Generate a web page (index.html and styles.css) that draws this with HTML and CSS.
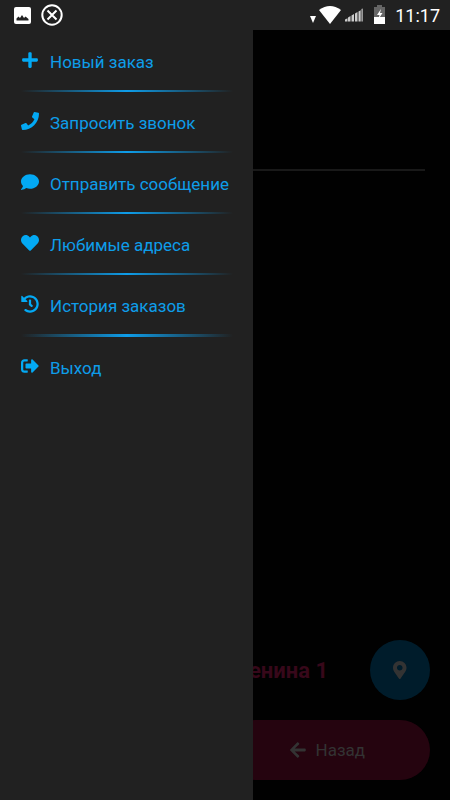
FILE: index.html
```html
<!DOCTYPE html>
<html lang="ru">
<head>
    <meta charset="utf-8" />
    <meta name="viewport" content="width=device-width, initial-scale=1" />
    <title>Такси</title>
    <link rel="stylesheet" href="styles.css">
</head>
<body class="body">
    <header class="statusbar">
        <svg class="picture" viewBox="0 0 17 17">
            <rect width="17" height="17" rx="2" fill="#fff" />
            <path d="M2.500 13.500v-2l2-2 1.500 1.500 2-3 2 3 1.500-1.500 3 2.500v1.500z" fill="#212121" />
        </svg>
        <svg class="cross" viewBox="0 0 22 22" fill="none" stroke="#fff" stroke-width="2">
            <circle cx="11" cy="11" r="9.7" />
            <path d="M6.500 6.500l9 9M15.500 6.500l-9 9" />
        </svg>
        <svg class="signals" viewBox="0 0 78 20">
            <path d="M1 11h6l-3 7z" fill="#fff" />
            <path d="M10 5q11-8 22 0l-11 14z" fill="#fff" />
            <path d="M36 14.500v2h2.500v-3.300zM39 12.500v4h2.500v-5.500zM42.500 10.500v6h2.500v-7.500zM46 8.500v8h2.500v-9.500zM49.500 6.500v10h2.200v-11.300zM52.500 4v12.500h1.200v-13z" fill="#ccc" />
            <path d="M68 0h5v2h3v10H65V2h3z" fill="#666" />
            <path d="M65 12h11v7H65z" fill="#fff" />
            <path d="M72 4l-4 6h2.500l-1 4 4-6H71z" fill="#fff" />
        </svg>
        <time class="clock">11:17</time>
    </header>
    <div class="app">
        <main class="screen">
            <hr class="line" />
            <div class="address">
                <strong class="street">Ленина 1</strong>
                <button class="locate" aria-label="Моё местоположение">
                    <svg class="pin" viewBox="0 0 384 512"><path d="M172.268 501.67C26.97 291.031 0 269.413 0 192 0 85.961 85.961 0 192 0s192 85.961 192 192c0 77.413-26.97 99.031-172.268 309.67-9.535 13.774-29.93 13.773-39.464 0zM192 272c44.183 0 80-35.817 80-80s-35.817-80-80-80-80 35.817-80 80 35.817 80 80 80z" /></svg>
                </button>
            </div>
            <div class="bottom">
                <button class="back">
                    <svg class="arrow" viewBox="0 0 448 512"><path d="M257.5 445.1l-22.2 22.2c-9.4 9.4-24.6 9.4-33.9 0L7 273c-9.4-9.4-9.4-24.6 0-33.9L201.4 44.7c9.4-9.4 24.6-9.4 33.9 0l22.2 22.2c9.5 9.5 9.3 25-.4 34.3L136.6 216H424c13.3 0 24 10.7 24 24v32c0 13.3-10.7 24-24 24H136.6l120.5 114.8c9.8 9.3 10 24.8.4 34.3z" /></svg>
                    Назад
                </button>
            </div>
        </main>
        <!-- side menu, lies over the screen -->
        <nav class="menu">
            <a class="item" href="#new">
                <svg class="icon" viewBox="-32 0 512 512"><path d="M416 208H272V64c0-17.67-14.33-32-32-32h-32c-17.67 0-32 14.33-32 32v144H32c-17.67 0-32 14.33-32 32v32c0 17.67 14.33 32 32 32h144v144c0 17.67 14.33 32 32 32h32c17.67 0 32-14.33 32-32V304h144c17.67 0 32-14.33 32-32v-32c0-17.67-14.33-32-32-32z" /></svg>
                Новый заказ
            </a>
            <hr class="separator" />
            <a class="item" href="#call">
                <svg class="icon" viewBox="0 0 512 512"><path d="M493.4 24.6l-104-24c-11.3-2.6-22.9 3.3-27.5 13.9l-48 112c-4.2 9.8-1.4 21.3 6.9 28l60.6 49.6c-36 76.7-98.9 140.5-177.2 177.2l-49.6-60.6c-6.8-8.3-18.2-11.1-28-6.9l-112 48C3.9 366.5-2 378.1.6 389.4l24 104C27.1 504.2 36.7 512 48 512c256.1 0 464-207.5 464-464 0-11.2-7.7-20.9-18.6-23.4z" /></svg>
                Запросить звонок
            </a>
            <hr class="separator" />
            <a class="item" href="#message">
                <svg class="icon" viewBox="0 0 512 512"><path d="M256 32C114.6 32 0 125.1 0 240c0 49.6 21.4 95 57 130.7C44.5 421.1 2.7 466 2.2 466.5c-2.2 2.3-2.8 5.7-1.5 8.7S4.8 480 8 480c66.3 0 116-31.8 140.6-51.4 32.7 12.3 69 19.4 107.4 19.4 141.4 0 256-93.1 256-208S397.4 32 256 32z" /></svg>
                Отправить сообщение
            </a>
            <hr class="separator" />
            <a class="item" href="#favorites">
                <svg class="icon" viewBox="0 0 512 512"><path d="M462.3 62.6C407.5 15.9 326 24.3 275.7 76.2L256 96.5l-19.7-20.3C186.1 24.3 104.5 15.9 49.7 62.6c-62.8 53.6-66.1 149.8-9.9 207.9l193.5 199.8c12.5 12.9 32.8 12.9 45.3 0l193.5-199.8c56.3-58.1 53-154.3-9.8-207.9z" /></svg>
                Любимые адреса
            </a>
            <hr class="separator" />
            <a class="item" href="#history">
                <svg class="icon" viewBox="0 0 512 512"><path d="M504 255.531c.253 136.64-111.18 248.372-247.82 248.468-59.015.042-113.223-20.53-155.822-54.911-11.077-8.94-11.905-25.541-1.839-35.607l11.267-11.267c8.609-8.609 22.353-9.551 31.891-1.984C173.062 425.135 212.781 440 256 440c101.705 0 184-82.311 184-184 0-101.705-82.311-184-184-184-48.814 0-93.149 18.969-126.068 49.932l50.754 50.754c10.08 10.08 2.941 27.314-11.313 27.314H24c-8.837 0-16-7.163-16-16V38.627c0-14.254 17.234-21.393 27.314-11.314l49.372 49.372C129.209 34.136 189.552 8 256 8c136.81 0 247.747 110.78 248 247.531zm-180.912 78.784l9.823-12.63c8.138-10.463 6.253-25.542-4.21-33.679L288 256.349V152c0-13.255-10.745-24-24-24h-16c-13.255 0-24 10.745-24 24v135.651l65.409 50.874c10.463 8.137 25.541 6.253 33.679-4.21z" /></svg>
                История заказов
            </a>
            <hr class="separator thick" />
            <a class="item" href="#exit">
                <svg class="icon" viewBox="0 0 512 512"><path d="M497 273L329 441c-15 15-41 4.5-41-17v-96H152c-13.3 0-24-10.7-24-24v-96c0-13.3 10.7-24 24-24h136V88c0-21.4 25.9-32 41-17l168 168c9.3 9.4 9.3 24.6 0 34zM192 436v-40c0-6.6-5.4-12-12-12H96c-17.7 0-32-14.3-32-32V160c0-17.7 14.3-32 32-32h84c6.6 0 12-5.4 12-12V76c0-6.6-5.4-12-12-12H96c-53 0-96 43-96 96v192c0 53 43 96 96 96h84c6.6 0 12-5.4 12-12z" /></svg>
                Выход
            </a>
        </nav>
    </div>
</body>
</html>
```

FILE: styles.css
```css
.body {
    margin: 0;
    min-height: 100vh;
    display: flex;
    flex-direction: column;
    background-color: #010101;
    font-family: Roboto, "Liberation Sans", sans-serif;
    font-size: 17px;
}
.statusbar {
    display: flex;
    align-items: center;
    height: 30px;
    padding: 0 10px 0 14px;
    background-color: #212121;
    color: white;
}
.picture {
    width: 17px;
    height: 17px;
    margin-right: 10px;
}
.cross {
    width: 22px;
    height: 22px;
}
.signals {
    width: 78px;
    height: 20px;
    margin-left: auto;
}
.clock {
    margin-left: 8px;
    font-size: 18px;
}
.app {
    position: relative;
    flex: 1;
    display: flex;
}
.screen {
    flex: 1;
    display: flex;
    flex-direction: column;
}
.line {
    width: calc(100% - 50px);
    height: 2px;
    margin: 139px auto 0;
    border: 0;
    background-color: #191919;
}
.address {
    display: flex;
    align-items: center;
    justify-content: flex-end;
    gap: 42px;
    margin-top: auto;
    padding: 20px;
}
.street {
    color: #37081a;
    font-size: 22px;
}
.locate {
    width: 60px;
    height: 60px;
    padding: 0;
    border: 0;
    border-radius: 50%;
    background-color: #001c2b;
}
.pin {
    display: block;
    height: 18px;
    margin: 0 auto;
    fill: #333;
}
.bottom {
    display: flex;
    justify-content: flex-end;
    padding: 0 20px 20px;
}
.back {
    display: flex;
    align-items: center;
    justify-content: center;
    gap: 10px;
    width: 50%;
    height: 60px;
    border: 0;
    border-radius: 30px;
    background-color: #25040f;
    color: #333;
    font-family: inherit;
    font-size: 17px;
}
.arrow {
    height: 18px;
    fill: #333;
}
.menu {
    position: absolute;
    top: 0;
    bottom: 0;
    left: 0;
    box-sizing: border-box;
    width: 253px;
    padding: 1px 20px 0 21px;
    background-color: #212121;
}
.item {
    box-sizing: border-box;
    display: flex;
    align-items: center;
    gap: 11px;
    height: 59px;
    padding-top: 2px;
    color: #0e9de9;
    text-decoration: none;
    white-space: nowrap;
}
.icon {
    flex: none;
    width: 18px;
    height: 18px;
    margin-bottom: 3px;
    fill: #03a9f4;
}
.separator {
    height: 2px;
    margin: 0;
    border: 0;
    background: linear-gradient(to right, transparent, #0e9de9, transparent);
}
.thick {
    height: 3px;
}
```
